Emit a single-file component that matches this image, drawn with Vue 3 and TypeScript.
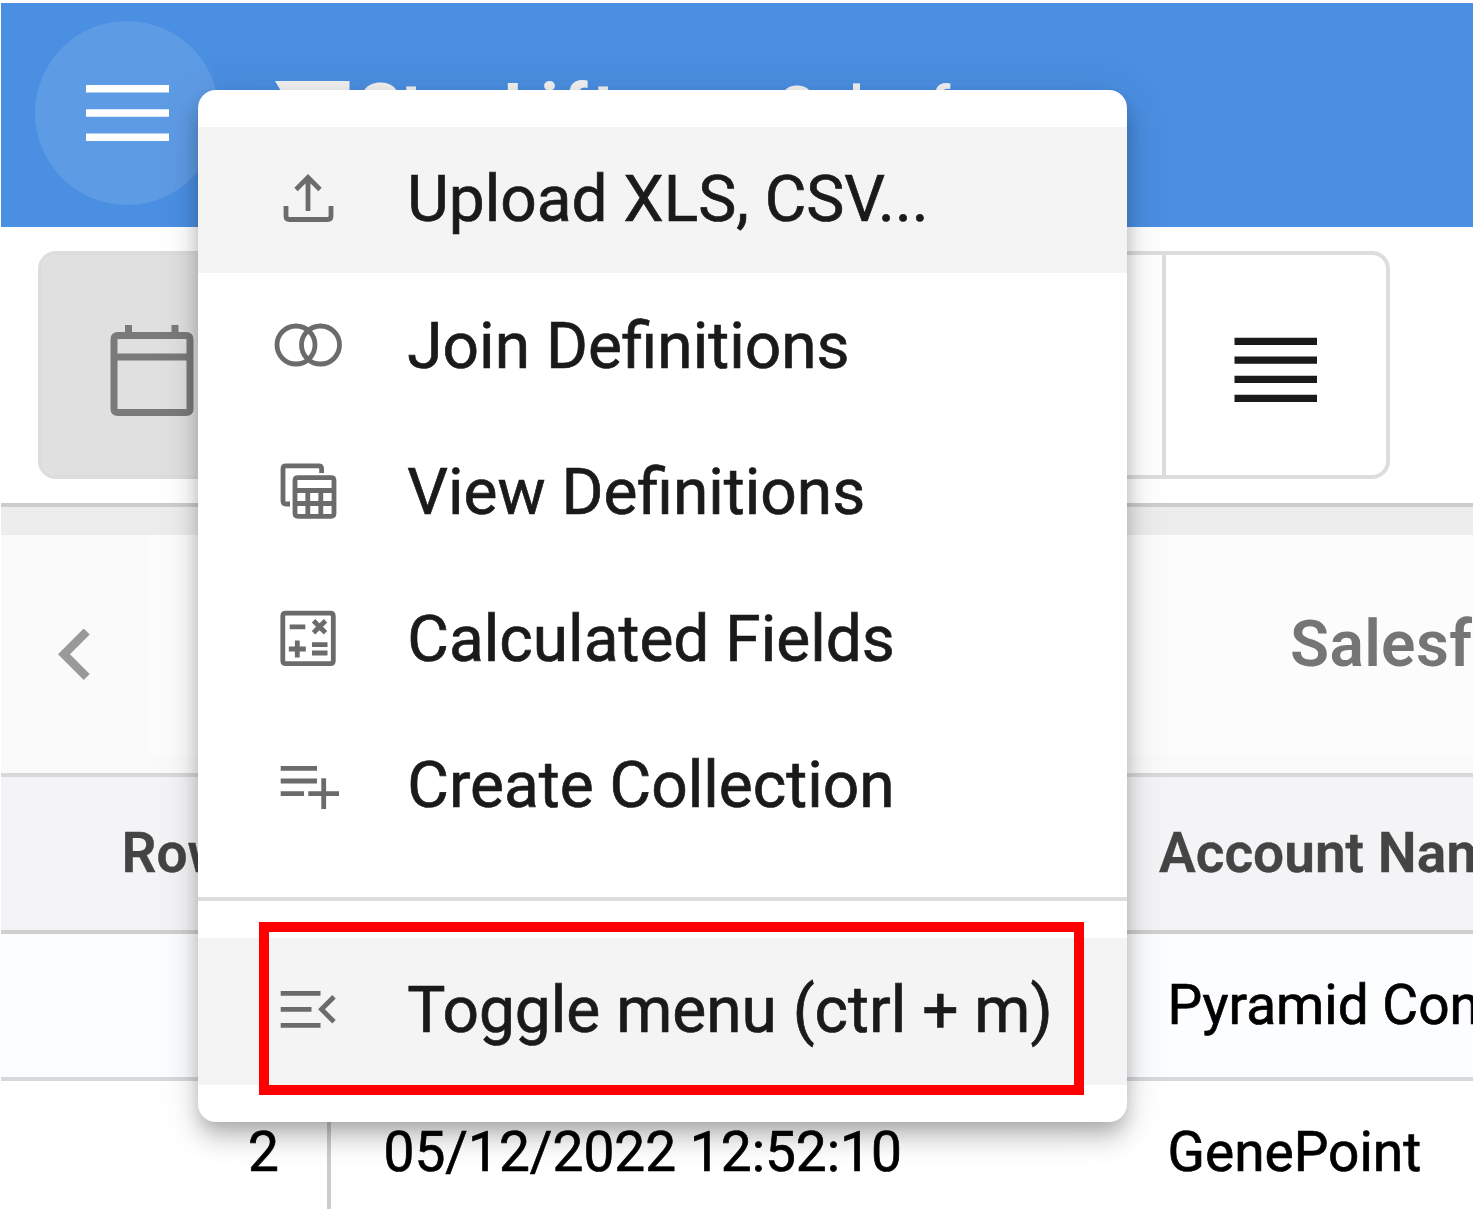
<script setup lang="ts">
interface MenuItem {
  label: string
  icon: string
  active?: boolean
}

const items: MenuItem[] = [
  { label: 'Upload XLS, CSV...', icon: 'M40 51V17.5M28 29.5L40 17.5L52 29.5M18 46V56Q18 59.5 21.5 59.5H59.5Q63 59.5 63 56V46', active: true },
  { label: 'Join Definitions', icon: 'M9 38a19 19 0 1 0 38 0a19 19 0 1 0 -38 0M33.5 38a19 19 0 1 0 38 0a19 19 0 1 0 -38 0' },
  { label: 'View Definitions', icon: 'M30 24.7H63Q66 24.7 66 27.7V60.3Q66 63.3 63 63.3H30Q27 63.3 27 60.3V27.7Q27 24.7 30 24.7ZM27 37.5H66M27 50.5H66M39.8 37.5V63M52.8 37.5V63M22 51H18Q15 51 15 48V15.8Q15 12.8 18 12.8H50.6Q53.6 12.8 53.6 15.8V20' },
  { label: 'Calculated Fields', icon: 'M17.8 13.2H62.3Q65.3 13.2 65.3 16.2V60.7Q65.3 63.7 62.3 63.7H17.8Q14.8 63.7 14.8 60.7V16.2Q14.8 13.2 17.8 13.2ZM21.7 26.8H37.3M45.5 20.8L57.5 32.8M57.5 20.8L45.5 32.8M20.8 49H37.8M29.3 40.5V57.5M44 44.6H59.5M44 53H59.5' },
  { label: 'Create Collection', icon: 'M12.7 22.4H49M12.7 35H49M12.7 47.7H36M40.3 47.7H71M55.7 32.2V63' },
]

const toggle: MenuItem = {
  label: 'Toggle menu (ctrl + m)',
  icon: 'M12.7 22.3H52.5M12.7 38.3H43.5M12.7 54.3H52.5M66 25.8L53.5 38.3L66 50.8',
  active: true,
}
</script>

<template>
  <div class="page">
    <header class="topbar">
      <div class="burger">
        <svg width="84" height="56" viewBox="0 0 84 56"><path d="M1 3.8H84M1 28H84M1 52.2H84" stroke="#fff" stroke-width="7.4" /></svg>
      </div>
      <svg class="logo" width="75" height="60" viewBox="0 0 75 60"><path d="M0 0H74.5V60H36Z" fill="#f3f3f3" /></svg>
      <span class="brand">Star L<span class="wide">if</span>t</span>
      <span class="source">Salesforce</span>
    </header>

    <section class="toolbar">
      <div class="group">
        <div class="btn selected">
          <svg width="84" height="94" viewBox="0 0 84 94">
            <path d="M8 11.5H76Q80 11.5 80 15.5V84.5Q80 88.5 76 88.5H8Q4 88.5 4 84.5V15.5Q4 11.5 8 11.5ZM4 33H80M18.5 1V10M65 1V10" fill="none" stroke="#7a7a7a" stroke-width="7" />
          </svg>
        </div>
        <div class="btn middle"></div>
        <div class="btn last">
          <svg width="84" height="66" viewBox="0 0 84 66"><path d="M0.5 4.3H83M0.5 23.2H83M0.5 42.3H83M0.5 61.3H83" stroke="#1a1a1a" stroke-width="7.3" /></svg>
        </div>
      </div>
    </section>

    <section class="tabs">
      <div class="prev">
        <svg width="34" height="52" viewBox="0 0 34 52"><path d="M28.7 2.5L6 25.3L28.7 48" fill="none" stroke="#999" stroke-width="8.5" /></svg>
      </div>
      <div class="tab">Salesforce</div>
    </section>

    <section class="table">
      <div class="tr head"><div class="num">Row</div><div class="date"></div><div class="name">Account Name</div></div>
      <div class="tr first"><div class="num"></div><div class="date"></div><div class="name">Pyramid Construction</div></div>
      <div class="tr second"><div class="num">2</div><div class="date">05/12/2022 12:52:10</div><div class="name">GenePoint</div></div>
    </section>

    <nav class="menu">
      <div v-for="item in items" :key="item.label" class="item" :class="{ active: item.active }">
        <svg width="80" height="80" viewBox="0 0 80 80"><path :d="item.icon" /></svg>
        <span>{{ item.label }}</span>
      </div>
      <div class="divider"></div>
      <div class="item active">
        <svg width="80" height="80" viewBox="0 0 80 80"><path :d="toggle.icon" /></svg>
        <span>{{ toggle.label }}</span>
      </div>
    </nav>
    <div class="highlight"></div>
  </div>
</template>

<style>
body {
  background: #fff;
  overflow: hidden;
}
</style>

<style scoped>
* {
  box-sizing: border-box;
}
.page {
  position: relative;
  width: 1473px;
  height: 1209px;
  padding: 3.4px 0 0 1px;
  overflow: hidden;
  background: #fff;
  font-family: Roboto, "Liberation Sans", sans-serif;
  white-space: nowrap;
}
svg {
  display: block;
  flex: none;
}
.topbar {
  display: flex;
  height: 224px;
  background: #4b8fe2;
  color: #f3f3f3;
}
.burger {
  flex: none;
  display: flex;
  align-items: center;
  justify-content: center;
  width: 184px;
  height: 184px;
  margin: 17.6px 0 0 34px;
  border-radius: 50%;
  background: #5e9be5;
}
.logo {
  margin: 77.6px 0 0 56px;
}
.brand {
  width: 420px;
  margin: 65.5px 0 0 9px;
  font-size: 68px;
  line-height: 80px;
  font-weight: 700;
  word-spacing: 1.5px;
}
.wide {
  letter-spacing: 5px;
}
.source {
  margin: 64.5px 0 0;
  font-size: 59px;
  line-height: 80px;
  font-weight: 500;
  letter-spacing: 1.2px;
}
.toolbar {
  height: 275.6px;
  padding: 23.6px 0 0 37px;
}
.group {
  display: flex;
  width: 1352px;
  height: 228px;
  border: 4px solid #ddd;
  border-radius: 18px;
  overflow: hidden;
}
.btn {
  display: flex;
  align-items: center;
}
.selected {
  width: 220px;
  padding: 0 0 0 68.4px;
  background: #e0e0e0;
}
.selected svg {
  margin-top: 12px;
}
.middle {
  flex: 1;
}
.last {
  width: 224px;
  border-left: 4px solid #ddd;
  padding: 10px 0 0 68px;
}
.tabs {
  display: flex;
  height: 274px;
  border-top: 4px solid #cdcdcd;
  border-bottom: 4px solid #d8d8d8;
  background: linear-gradient(#ededed 28px, #fafafa 28px);
}
.prev {
  width: 147px;
  padding: 122px 0 0 57px;
}
.tab {
  flex: 1;
  height: 220px;
  margin-top: 28px;
  padding-left: 1142px;
  background: #fcfcfc;
  font-size: 64px;
  line-height: 219px;
  font-weight: 600;
  letter-spacing: 0.35px;
  color: #757575;
  overflow: hidden;
}
.table {
  font-size: 55px;
  color: #000;
}
.tr {
  display: flex;
  align-items: center;
  height: 146.6px;
  border-bottom: 4px solid #d6d8db;
}
.first,
.second {
  -webkit-text-stroke: 0.7px #000;
}
.head {
  height: 157px;
  background: #f4f4f6;
  border-bottom-color: #cfcfcf;
  font-weight: 600;
  color: #444;
  -webkit-text-stroke: 0.4px #444;
}
.first {
  background: #fcfdff;
}
.num {
  flex: none;
  align-self: stretch;
  display: flex;
  align-items: center;
  justify-content: flex-end;
  width: 330px;
  padding-right: 48px;
}
.head .num {
  justify-content: flex-start;
  padding-left: 120.5px;
}
.second .num {
  border-right: 4px solid #ccc;
}
.date {
  flex: none;
  width: 836.5px;
  padding-left: 52.5px;
}
.head .date {
  width: 828px;
}
.menu {
  position: absolute;
  left: 198px;
  top: 90px;
  width: 928.6px;
  height: 1031.6px;
  padding-top: 36.8px;
  border-radius: 18px;
  background: #fff;
  overflow: hidden;
  box-shadow: 0 9px 18px -5px rgba(0, 0, 0, 0.2), 0 18px 23px rgba(0, 0, 0, 0.14), 0 5px 46px rgba(0, 0, 0, 0.12);
}
.item {
  display: flex;
  align-items: center;
  height: 146.6px;
  padding-left: 70px;
  font-size: 64px;
  color: #1a1a1a;
  -webkit-text-stroke: 0.7px #1a1a1a;
}
.item span {
  position: relative;
  top: -0.6px;
}
.item svg {
  margin-right: 59.3px;
  fill: none;
  stroke: #6b6b6b;
  stroke-width: 4.8;
}
.active {
  background: #f4f4f4;
}
.divider {
  height: 4.4px;
  margin: 37px 0;
  background: #ddd;
}
.highlight {
  position: absolute;
  left: 259px;
  top: 921.5px;
  width: 825px;
  height: 173px;
  border: 10px solid #f00;
}
</style>
